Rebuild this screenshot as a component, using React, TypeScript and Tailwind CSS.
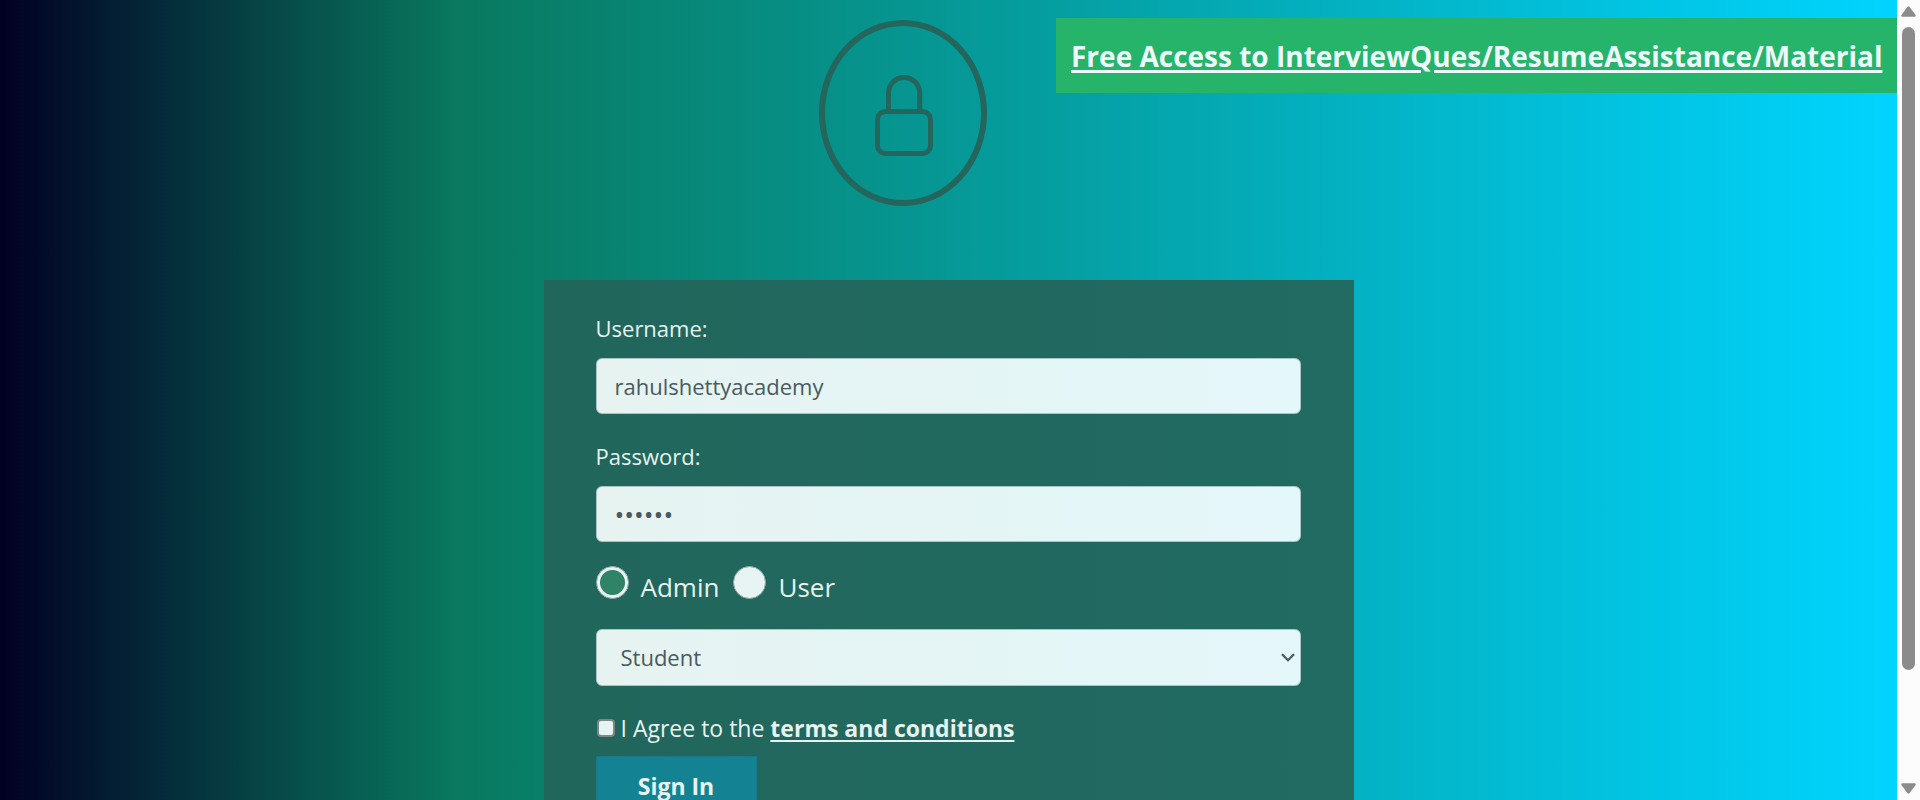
import type { ReactNode } from "react";

const fieldClass =
  "block w-full rounded-[6px] border border-[#a9c4c6] bg-linear-to-r from-[#e6f3f1] to-[#e4f7fa] text-[#495a60] outline-none";

function LockBadge() {
  return (
    <svg width="168" height="186" viewBox="0 0 168 186" fill="none" stroke="#24665b" aria-hidden="true">
      <ellipse cx="84" cy="93" rx="81" ry="90" strokeWidth="6" />
      <rect x="58.5" y="91.5" width="53" height="42" rx="8" strokeWidth="5" />
      <path d="M69.5 91V73a15.6 15.6 0 0 1 31.2 0V91" strokeWidth="5" />
    </svg>
  );
}

function Field({ id, label, children }: { id: string; label: string; children: ReactNode }) {
  return (
    <div>
      <label htmlFor={id} className="mb-3 block text-[22px] leading-9">
        {label}
      </label>
      {children}
    </div>
  );
}

function RoleOption({ value, label, defaultChecked }: { value: string; label: string; defaultChecked?: boolean }) {
  return (
    <label className="flex items-start gap-3 text-[26px] leading-[42px]">
      <input
        type="radio"
        name="role"
        value={value}
        defaultChecked={defaultChecked}
        className="size-[33px] shrink-0 appearance-none rounded-full border border-[#8fa5a3] bg-[#e8f3f3] checked:bg-[radial-gradient(circle,#2f8468_12px,#e8f3f3_13px)]"
      />
      {label}
    </label>
  );
}

function ScrollTrack() {
  return (
    <div className="flex w-[23px] shrink-0 flex-col items-center bg-[#fcfcfc] py-[6px]" aria-hidden="true">
      <svg width="15" height="11" viewBox="0 0 15 11" fill="#8b8b8b">
        <path d="M6.3 1.1a1.5 1.5 0 0 1 2.4 0l5.7 7.7c.6.9.2 2-.9 2h-12c-1.1 0-1.5-1.1-.9-2z" />
      </svg>
      <div className="mt-[10px] flex w-[13px] flex-1 flex-col">
        <div className="h-[85%] rounded-full bg-[#8b8b8b]" />
      </div>
      <svg width="15" height="11" viewBox="0 0 15 11" fill="#8b8b8b">
        <path d="M6.3 9.9a1.5 1.5 0 0 0 2.4 0l5.7-7.7c.6-.9.2-2-.9-2h-12c-1.1 0-1.5 1.1-.9 2z" />
      </svg>
    </div>
  );
}

export default function App() {
  return (
    <div className="flex h-screen overflow-hidden font-['Segoe_UI','Open_Sans',sans-serif] text-[#e6f3f1]">
      <main className="min-w-0 flex-1 overflow-y-auto bg-[linear-gradient(90deg,#020024_0%,#09795f_24.2%,#00d4ff_100%)] [scrollbar-width:none]">
        <header className="flex items-start justify-end gap-[69px] pt-[18px]">
          <div className="pt-[2px]">
            <LockBadge />
          </div>
          <a
            href="#materials"
            className="flex h-[75px] w-[841px] items-center whitespace-nowrap bg-[#26b36a] px-[15px] text-[28px] font-bold text-[#edfafc] underline decoration-[3px] underline-offset-[3px]"
          >
            Free Access to InterviewQues/ResumeAssistance/Material
          </a>
        </header>

        <form
          className="mx-auto mt-[74px] w-[43%] max-w-[810px] bg-linear-to-r from-[#21665b] to-[#216b63] pt-[30px] pr-[53px] pb-20 pl-[52px]"
          onSubmit={(event) => event.preventDefault()}
        >
          <div className="flex flex-col gap-6">
            <Field id="username" label="Username:">
              <input id="username" type="text" defaultValue="rahulshettyacademy" className={`${fieldClass} h-14 px-[18px] text-[22px]`} />
            </Field>
            <Field id="password" label="Password:">
              <input id="password" type="password" defaultValue="secret" className={`${fieldClass} h-14 px-[18px] text-[26px]`} />
            </Field>
          </div>
          <div className="mt-6 flex gap-[14px]">
            <RoleOption value="admin" label="Admin" defaultChecked />
            <RoleOption value="user" label="User" />
          </div>
          <div className="mt-[21px] grid items-center">
            <select aria-label="Role" className={`${fieldClass} col-start-1 row-start-1 h-[57px] appearance-none px-6 text-[22px]`}>
              <option>Student</option>
              <option>Teacher</option>
              <option>Consultant</option>
            </select>
            <svg
              className="pointer-events-none col-start-1 row-start-1 mr-[6px] justify-self-end"
              width="14"
              height="9"
              viewBox="0 0 14 9"
              fill="none"
              stroke="#495a60"
              strokeWidth="2.2"
              aria-hidden="true"
            >
              <path d="M1 1.2 7 7.2l6-6" />
            </svg>
          </div>
          <div className="mt-6 flex items-center gap-[6px] text-[23px] leading-9">
            <input
              id="terms"
              type="checkbox"
              className="ml-px size-[18px] shrink-0 appearance-none rounded-[4px] border-2 border-[#7c8886] bg-[#e8f3f3] checked:bg-[#13818f]"
            />
            <label htmlFor="terms">
              I Agree to the{" "}
              <a href="#terms" className="font-bold underline decoration-2 underline-offset-[3px]">
                terms and conditions
              </a>
            </label>
          </div>
          <button type="submit" className="mt-[10px] h-[60px] w-[161px] border border-[#17798a] bg-[#138393] text-[23px] font-bold">
            Sign In
          </button>
        </form>
      </main>
      <ScrollTrack />
    </div>
  );
}
